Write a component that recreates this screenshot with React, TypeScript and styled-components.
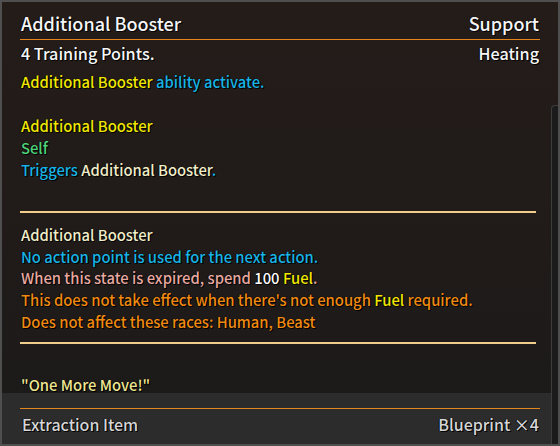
import React from "react";
import styled, { createGlobalStyle } from "styled-components";

const Global = createGlobalStyle`
  html, body { margin: 0; padding: 0; background: #2a2a2a; }
  body { font-family: "Noto Sans CJK KR", "Noto Sans", sans-serif; }
`;

const outline =
  "1px 1px 0 rgba(0,0,0,0.95), 0 0 1px rgba(0,0,0,0.9), -1px 0 0 rgba(0,0,0,0.5)";

const Panel = styled.div`
  box-sizing: border-box;
  width: 560px;
  height: 446px;
  border: 2px solid #4f4f4f;
  display: flex;
  background: linear-gradient(180deg, #241c19 0%, #201b19 55%, #1b1a1a 100%);
  overflow: hidden;
`;

const Main = styled.div`
  flex: 1;
  display: flex;
  flex-direction: column;
  min-width: 0;
`;

const Body = styled.div`
  box-sizing: border-box;
  height: 391px;
  flex: none;
  padding: 9px 11px 0 18px;
  text-shadow: ${outline};
  font-weight: 500;
`;

const Row = styled.div<{ $size: number; $rule?: boolean }>`
  display: flex;
  justify-content: space-between;
  align-items: center;
  color: #f6f6f6;
  font-size: ${(p) => p.$size}px;
  line-height: 24px;
  height: 24px;
  padding: 0 1px 0 1px;
  ${(p) => (p.$rule ? "padding-bottom: 4px; border-bottom: 1px solid #e4861c;" : "margin-top: 1px;")}
`;

const Block = styled.div<{ $lh: number; $mt: number }>`
  margin-top: ${(p) => p.$mt}px;
  padding-left: 1px;
  font-size: 14.8px;
  line-height: ${(p) => p.$lh}px;
`;

const Line = styled.div<{ $blank?: boolean }>`
  white-space: nowrap;
  ${(p) => (p.$blank ? "height: 22px;" : "")}
`;

const C = styled.span<{ $c: string }>`
  color: ${(p) => p.$c};
`;

const Sep = styled.div<{ $mt: number }>`
  margin-top: ${(p) => p.$mt}px;
  height: 2px;
  margin-right: 4px;
  background: #f0cd8a;
`;

const Quote = styled.div`
  margin-top: 33px;
  padding-left: 1px;
  font-size: 14.8px;
  line-height: 16px;
  color: #efe792;
`;

const Footer = styled.div`
  flex: 1;
  background: #2c2c2c;
  padding: 15px 11px 0 18px;
  text-shadow: ${outline};
  font-weight: 500;
`;

const FooterRow = styled.div`
  display: flex;
  justify-content: space-between;
  border-top: 1px solid #e4861c;
  padding: 3px 1px 0 2px;
  font-size: 16px;
  line-height: 24px;
  color: #d6d6d6;
`;

const Rail = styled.div`
  width: 7px;
  display: flex;
  flex-direction: column;
  padding-top: 103px;
`;

const Track = styled.div`
  flex: 1;
  background: #1b1b1b;
  border-left: 1px solid #3d3d3d;
  border-top: 1px solid #3d3d3d;
  border-top-left-radius: 4px;
`;

const Y = "#f1e700";
const CY = "#19b4e6";
const GR = "#4fd27a";
const CR = "#f1edc8";
const PK = "#e8a9a0";
const OR = "#f08a12";
const WH = "#ffffff";

export default function App() {
  return (
    <>
      <Global />
      <Panel>
        <Main>
          <Body>
            <Row $size={18} $rule>
              <span>Additional Booster</span>
              <span>Support</span>
            </Row>
            <Row $size={16.2}>
              <span>4 Training Points.</span>
              <span>Heating</span>
            </Row>
            <Block $lh={22} $mt={6}>
              <Line>
                <C $c={Y}>Additional Booster</C> <C $c={CY}>ability activate.</C>
              </Line>
              <Line $blank />
              <Line>
                <C $c={Y}>Additional Booster</C>
              </Line>
              <Line>
                <C $c={GR}>Self</C>
              </Line>
              <Line>
                <C $c={CY}>Triggers</C> <C $c={CR}>Additional Booster</C>
                <C $c={CY}>.</C>
              </Line>
            </Block>
            <Sep $mt={30} />
            <Block $lh={21.7} $mt={11}>
              <Line>
                <C $c={CR}>Additional Booster</C>
              </Line>
              <Line>
                <C $c={CY}>No action point is used for the next action.</C>
              </Line>
              <Line>
                <C $c={PK}>When this state is expired, spend </C>
                <C $c={WH}>100</C> <C $c={Y}>Fuel</C>
                <C $c={PK}>.</C>
              </Line>
              <Line>
                <C $c={OR}>This does not take effect when there's not enough </C>
                <C $c={Y}>Fuel</C> <C $c={OR}>required.</C>
              </Line>
              <Line>
                <C $c={OR}>Does not affect these races: Human, Beast</C>
              </Line>
            </Block>
            <Sep $mt={9} />
            <Quote>"One More Move!"</Quote>
          </Body>
          <Footer>
            <FooterRow>
              <span>Extraction Item</span>
              <span>Blueprint ×4</span>
            </FooterRow>
          </Footer>
        </Main>
        <Rail>
          <Track />
        </Rail>
      </Panel>
    </>
  );
}
